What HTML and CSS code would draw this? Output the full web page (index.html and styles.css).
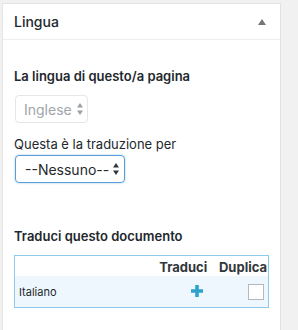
FILE: index.html
```html
<!DOCTYPE html>
<html lang="it">
<head>
<meta charset="utf-8">
<link rel="stylesheet" href="styles.css">
</head>
<body>
<div class="panel">
  <div class="panel-header">
    <h2 class="panel-title">Lingua</h2>
    <svg class="toggle" width="8" height="6" viewBox="0 0 8 6"><path d="M0 6 L4 0 L8 6 Z" fill="#72777c"/></svg>
  </div>
  <div class="panel-body">
    <p class="label-strong first">La lingua di questo/a pagina</p>
    <div class="select disabled">
      <span class="select-text">Inglese</span>
      <svg class="arrows" width="6" height="12" viewBox="0 0 6 12"><path d="M3 0 L6 4.6 H0 Z M3 12 L6 7.4 H0 Z" fill="currentColor"/></svg>
    </div>
    <p class="label">Questa è la traduzione per</p>
    <div class="select focus">
      <span class="select-text">--Nessuno--</span>
      <svg class="arrows" width="6" height="12" viewBox="0 0 6 12"><path d="M3 0 L6 4.6 H0 Z M3 12 L6 7.4 H0 Z" fill="currentColor"/></svg>
    </div>
    <p class="label-strong second">Traduci questo documento</p>
    <table class="trans">
      <colgroup><col class="c-lang"><col class="c-tr"><col class="c-dup"></colgroup>
      <thead>
        <tr><th class="lang-col"></th><th class="tr-col">Traduci</th><th class="dup-col">Duplica</th></tr>
      </thead>
      <tbody>
        <tr>
          <td class="lang-col">Italiano</td>
          <td class="tr-col"><svg width="12" height="12" viewBox="0 0 12 12"><path d="M4.2 0 H7.8 V4.2 H12 V7.8 H7.8 V12 H4.2 V7.8 H0 V4.2 H4.2 Z" fill="#2ea2cc"/></svg></td>
          <td class="dup-col"><span class="checkbox"></span></td>
        </tr>
      </tbody>
    </table>
  </div>
</div>
</body>
</html>
```

FILE: styles.css
```css
html, body {
  margin: 0;
  padding: 0;
  background: #f1f1f1;
  height: 100%;
  overflow: hidden;
}
body {
  font-family: Inter, "Noto Sans", sans-serif;
  color: #23282d;
}
.panel {
  margin: 3px 0 0 2px;
  width: 277px;
  min-height: 340px;
  background: #fff;
  border: 1px solid #e5e5e5;
  border-right-color: #e2e2e2;
}
.panel-header {
  height: 35px;
  border-bottom: 1px solid #eeeeee;
  display: flex;
  align-items: center;
  justify-content: space-between;
  padding: 0 14px 0 11px;
}
.panel-title {
  margin: 0;
  font-size: 14px;
  font-weight: 500;
  line-height: 1;
}
.toggle {
  display: block;
}
.panel-body {
  padding: 0 11px;
}
.label-strong {
  margin: 0;
  font-size: 13px;
  font-weight: 600;
  line-height: 18px;
}
.label-strong.first {
  padding-top: 27px;
}
.label-strong.second {
  margin-top: 44px;
}
.label {
  margin: 12px 0 0;
  font-size: 13px;
  line-height: 18px;
}
.select {
  display: flex;
  align-items: center;
  justify-content: space-between;
  box-sizing: border-box;
  height: 28px;
  border-radius: 4px;
  font-size: 14px;
  white-space: nowrap;
  margin-left: 1px;
}
.select .arrows {
  flex-shrink: 0;
  display: block;
}
.select.disabled {
  margin-top: 10px;
  width: 73px;
  border: 1px solid #e6e6e6;
  color: #a0a5aa;
  padding: 0 4px 0 8px;
}
.select.focus {
  margin-top: 2px;
  width: 110px;
  border: 1px solid #5b9dd9;
  box-shadow: 0 0 2px rgba(30, 140, 190, 0.5);
  color: #23282d;
  padding: 0 5px 0 9px;
}
.select.disabled .arrows { color: #9aa0a5; }
.select.focus .arrows { color: #32373c; }
.trans {
  margin-top: 10px;
  width: 255px;
  table-layout: fixed;
  border: 1px solid #8ccbea;
  border-collapse: collapse;
  font-size: 13px;
}
.c-lang { width: 141px; }
.c-tr { width: 56px; }
.c-dup { width: 56px; }
.trans th {
  font-weight: 700;
  font-size: 13px;
  height: 20px;
  padding: 0;
  text-align: right;
  color: #32373c;
  vertical-align: bottom;
  line-height: 18px;
  white-space: nowrap;
}
.trans th.tr-col { padding-right: 5px; }
.trans th.dup-col { padding-right: 1px; }
.trans tbody tr {
  background: #eef7fd;
}
.trans td {
  height: 31px;
  padding: 0;
  vertical-align: middle;
}
.trans td.lang-col {
  padding-left: 4px;
  font-size: 11px;
  color: #23282d;
}
.trans td.tr-col {
  text-align: right;
  padding-right: 9px;
}
.trans td.tr-col svg {
  display: inline-block;
  vertical-align: middle;
  margin-top: -4px;
}
.trans td.dup-col {
  text-align: right;
  padding-right: 4px;
}
.checkbox {
  display: inline-block;
  vertical-align: middle;
  width: 14px;
  height: 14px;
  border: 1px solid #b4b9be;
  background: #fff;
}
```
